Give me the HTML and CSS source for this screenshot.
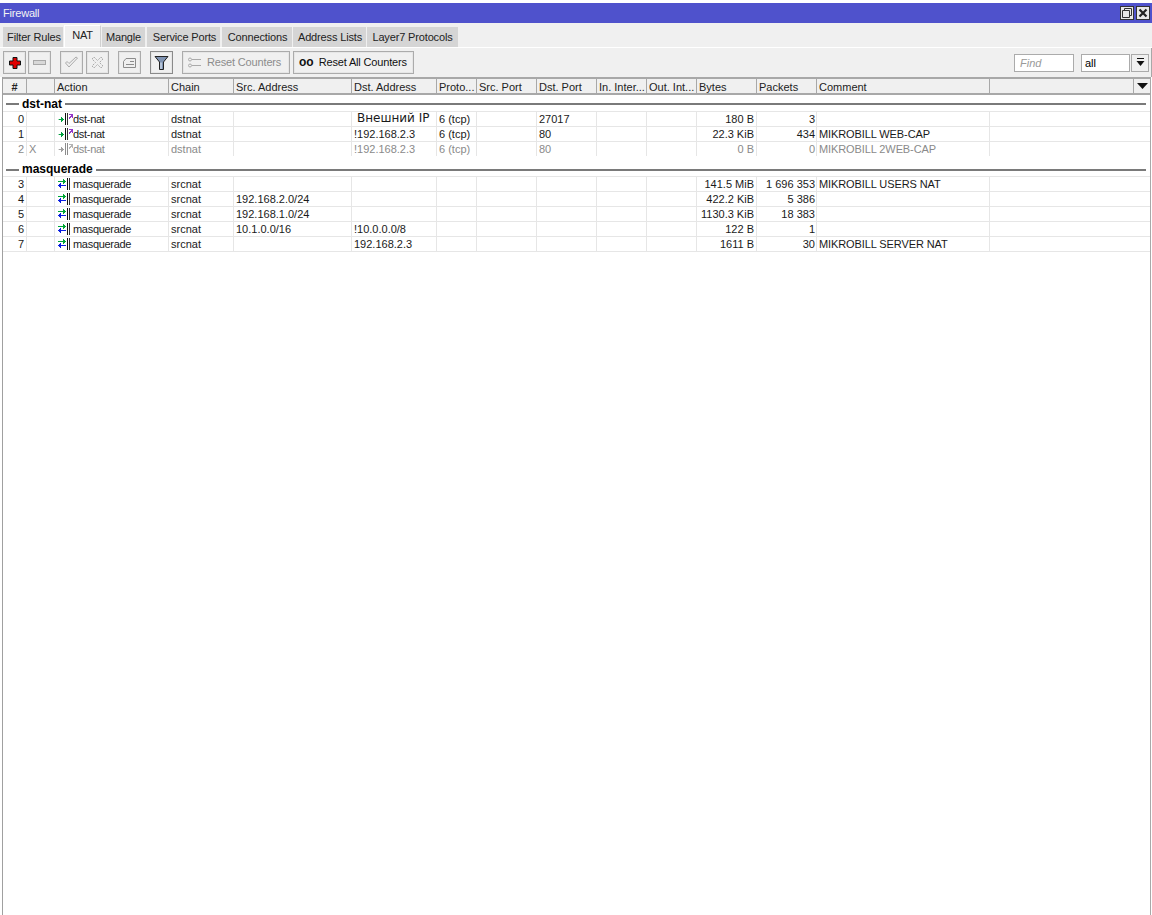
FILE: index.html
```html
<!DOCTYPE html>
<html lang="en">
<head>
<meta charset="utf-8">
<title>Firewall</title>
<link rel="stylesheet" href="styles.css">
</head>
<body>
<svg class="defs" width="0" height="0" aria-hidden="true">
  <symbol id="dst" viewBox="0 0 15 12"><path d="M0 6h1v1H0z" fill="#a8d8b8"/><path d="M1 6h2V4h1v1h1v1h1v1H5v1H4v1H3V7H1z" fill="#00a040"/><path d="M7 0h1v12H7z" fill="#111"/><path d="M9 0h1v12H9z" fill="#333"/><path d="M11 1h4v4h-1V4h-1v1h-1v1h-1V4h1V3h1V2h-2z" fill="#9438c8"/></symbol>
  <symbol id="dst-off" viewBox="0 0 15 12"><path d="M0 6h1v1H0z" fill="#ddd"/><path d="M1 6h2V4h1v1h1v1h1v1H5v1H4v1H3V7H1z" fill="#a0a0a0"/><path d="M7 0h1v12H7zM9 0h1v12H9z" fill="#8c8c8c"/><path d="M11 1h4v4h-1V4h-1v1h-1v1h-1V4h1V3h1V2h-2z" fill="#b4b4b4"/></symbol>
  <symbol id="masq" viewBox="0 0 15 12"><path d="M0 3h5V1h1v1h1v1h1v1H7v1H6v1H5V4H0z" fill="#00a838"/><path d="M8 7H3V5H2v1H1v1H0v1h1v1h1v1h1V8h5z" fill="#0a1ee0"/><path d="M9 0h1v12H9z" fill="#111"/><path d="M11 0h1v12h-1z" fill="#333"/></symbol>
</svg>
<div class="window">
  <div class="titlebar">
    <span class="title">Firewall</span>
    <div class="winbtns">
      <span class="winbtn"><svg width="12" height="12" viewBox="0 0 12 12"><path d="M1.500 3.500h7v7h-7zM3.500 3.500v-2h7v7h-2" fill="none" stroke="#333"/></svg></span>
      <span class="winbtn"><svg width="12" height="12" viewBox="0 0 12 12"><path d="M2.500 2.500l7 7M9.500 2.500l-7 7" stroke="#222" stroke-width="2.200" fill="none"/></svg></span>
    </div>
  </div>
  <div class="tabs">
    <span class="tab t1">Filter Rules</span>
    <span class="tab active">NAT</span>
    <span class="tab t3">Mangle</span>
    <span class="tab t4">Service Ports</span>
    <span class="tab t5">Connections</span>
    <span class="tab t6">Address Lists</span>
    <span class="tab t7">Layer7 Protocols</span>
  </div>
  <div class="toolbar">
    <button class="tb"><svg width="14" height="14" viewBox="0 0 14 14"><path d="M5 1.500h4v3.500h3.500v4H9v3.500H5V9H1.500V5H5z" fill="#e00000" stroke="#111"/></svg></button>
    <button class="tb gap-s"><svg width="13" height="7" viewBox="0 0 13 7"><rect x="0.500" y="1.500" width="12" height="4" fill="#d8d8d8" stroke="#a8a8a8"/></svg></button>
    <button class="tb gap-l"><svg width="15" height="13" viewBox="0 0 15 13"><path d="M1.500 7l3.500 4 8.500-9-1.500-1-7 6.500-2-2z" fill="#efefef" stroke="#ababab"/></svg></button>
    <button class="tb gap-s2"><svg width="13" height="13" viewBox="0 0 13 13"><path d="M1 3l2-2 3.500 3.500L10 1l2 2-3.500 3.500L12 10l-2 2-3.500-3.500L3 12l-2-2 3.500-3.500z" fill="#efefef" stroke="#ababab" stroke-dasharray="2 1"/></svg></button>
    <button class="tb gap-m"><svg width="15" height="12" viewBox="0 0 15 12"><path d="M1.500 4.500L4 1.500h9.500v9h-12z" fill="#efefef" stroke="#8c8c8c"/><path d="M8 4.500h4M4 7.500h8" stroke="#8c8c8c"/></svg></button>
    <button class="tb gap-m dark"><svg width="15" height="16" viewBox="0 0 15 16"><path d="M1 1.500h13L9.500 7v7.500h-4V7z" fill="#7f93b2" stroke="#222"/><path d="M7 7.500v6.500" stroke="#c9d4e4" stroke-width="1.500"/></svg></button>
    <button class="tb wide reset gap-m"><svg width="13" height="11" viewBox="0 0 13 11"><circle cx="2" cy="2.500" r="1.500" fill="none" stroke="#aaa"/><circle cx="2" cy="8.500" r="1.500" fill="none" stroke="#aaa"/><path d="M4 2.500h9M4 8.500h9" stroke="#aaa"/></svg><span class="off">Reset Counters</span></button>
    <button class="tb wide resetall"><span class="oo">oo</span><span>Reset All Counters</span></button>
    <div class="spacer"></div>
    <span class="find">Find</span>
    <span class="select">all</span>
    <span class="selbtn"><svg width="9" height="9" viewBox="0 0 9 9"><path d="M1 0.500h7" stroke="#111"/><path d="M0.500 3h8L4.500 8z" fill="#111"/></svg></span>
  </div>
  <div class="list">
    <div class="grid head">
      <span class="c center">#</span><span class="c"></span><span class="c">Action</span><span class="c">Chain</span><span class="c">Src. Address</span><span class="c">Dst. Address</span><span class="c">Proto...</span><span class="c">Src. Port</span><span class="c">Dst. Port</span><span class="c">In. Inter...</span><span class="c">Out. Int...</span><span class="c">Bytes</span><span class="c">Packets</span><span class="c">Comment</span><span class="c"></span>
      <span class="c menu"><svg width="11" height="6" viewBox="0 0 11 6"><path d="M0 0h11L5.500 6z" fill="#111"/></svg></span>
    </div>
    <div class="group first"><span class="dash"></span><b>dst-nat</b><span class="rule"></span></div>
    <div class="grid row">
      <span class="c num">0</span><span class="c"></span><span class="c act"><svg class="ic"><use href="#dst"/></svg>dst-nat</span><span class="c">dstnat</span><span class="c"></span><span class="c ext">Внешний IP</span><span class="c">6 (tcp)</span><span class="c"></span><span class="c">27017</span><span class="c"></span><span class="c"></span><span class="c r">180 B</span><span class="c r">3</span><span class="c"></span><span class="c"></span>
    </div>
    <div class="grid row">
      <span class="c num">1</span><span class="c"></span><span class="c act"><svg class="ic"><use href="#dst"/></svg>dst-nat</span><span class="c">dstnat</span><span class="c"></span><span class="c">!192.168.2.3</span><span class="c">6 (tcp)</span><span class="c"></span><span class="c">80</span><span class="c"></span><span class="c"></span><span class="c r">22.3 KiB</span><span class="c r">434</span><span class="c">MIKROBILL WEB-CAP</span><span class="c"></span>
    </div>
    <div class="grid row disabled">
      <span class="c num">2</span><span class="c flag">X</span><span class="c act"><svg class="ic"><use href="#dst-off"/></svg>dst-nat</span><span class="c">dstnat</span><span class="c"></span><span class="c">!192.168.2.3</span><span class="c">6 (tcp)</span><span class="c"></span><span class="c">80</span><span class="c"></span><span class="c"></span><span class="c r">0 B</span><span class="c r">0</span><span class="c">MIKROBILL 2WEB-CAP</span><span class="c"></span>
    </div>
    <div class="group second"><span class="dash"></span><b>masquerade</b><span class="rule"></span></div>
    <div class="grid row">
      <span class="c num">3</span><span class="c"></span><span class="c act"><svg class="ic"><use href="#masq"/></svg>masquerade</span><span class="c">srcnat</span><span class="c"></span><span class="c"></span><span class="c"></span><span class="c"></span><span class="c"></span><span class="c"></span><span class="c"></span><span class="c r">141.5 MiB</span><span class="c r">1 696 353</span><span class="c">MIKROBILL USERS NAT</span><span class="c"></span>
    </div>
    <div class="grid row">
      <span class="c num">4</span><span class="c"></span><span class="c act"><svg class="ic"><use href="#masq"/></svg>masquerade</span><span class="c">srcnat</span><span class="c">192.168.2.0/24</span><span class="c"></span><span class="c"></span><span class="c"></span><span class="c"></span><span class="c"></span><span class="c"></span><span class="c r">422.2 KiB</span><span class="c r">5 386</span><span class="c"></span><span class="c"></span>
    </div>
    <div class="grid row">
      <span class="c num">5</span><span class="c"></span><span class="c act"><svg class="ic"><use href="#masq"/></svg>masquerade</span><span class="c">srcnat</span><span class="c">192.168.1.0/24</span><span class="c"></span><span class="c"></span><span class="c"></span><span class="c"></span><span class="c"></span><span class="c"></span><span class="c r">1130.3 KiB</span><span class="c r">18 383</span><span class="c"></span><span class="c"></span>
    </div>
    <div class="grid row">
      <span class="c num">6</span><span class="c"></span><span class="c act"><svg class="ic"><use href="#masq"/></svg>masquerade</span><span class="c">srcnat</span><span class="c">10.1.0.0/16</span><span class="c">!10.0.0.0/8</span><span class="c"></span><span class="c"></span><span class="c"></span><span class="c"></span><span class="c"></span><span class="c r">122 B</span><span class="c r">1</span><span class="c"></span><span class="c"></span>
    </div>
    <div class="grid row">
      <span class="c num">7</span><span class="c"></span><span class="c act"><svg class="ic"><use href="#masq"/></svg>masquerade</span><span class="c">srcnat</span><span class="c"></span><span class="c">192.168.2.3</span><span class="c"></span><span class="c"></span><span class="c"></span><span class="c"></span><span class="c"></span><span class="c r">1611 B</span><span class="c r">30</span><span class="c">MIKROBILL SERVER NAT</span><span class="c"></span>
    </div>
  </div>
</div>
</body>
</html>
```
FILE: styles.css
```css
html, body { margin: 0; padding: 0; height: 100%; background: #fff; }
body { overflow: hidden; font: 11px/15px "Liberation Sans", Arial, sans-serif; color: #111; }
.defs { position: absolute; }
.window { height: 915px; padding-top: 3px; box-sizing: border-box; display: flex; flex-direction: column; }

.titlebar { height: 20px; flex: none; background: #4f52cc; display: flex; align-items: center; justify-content: space-between; padding: 0 2px 0 3px; }
.title { color: #f4f4f4; font-size: 11px; letter-spacing: -0.2px; }
.winbtns { display: flex; gap: 2px; }
.winbtn { width: 12px; height: 12px; border: 1px solid #333; background: #e8e8e8; display: flex; }

.tabs { height: 25px; flex: none; box-sizing: border-box; background: #f0f0f0; border-bottom: 1px solid #fff; display: flex; align-items: flex-end; padding-left: 3px; }
.tab { height: 20px; box-sizing: border-box; background: #d5d5d5; padding: 3px 0 0; text-align: center; color: #222; letter-spacing: -0.15px; white-space: nowrap; }
.t1 { width: 60px; padding-left: 2px; }
.active { width: 37px; height: 22px; margin-left: 1px; background: #f0f0f0; padding-top: 2px; border-left: 1px solid #fff; border-top: 1px solid #fff; border-right: 1px solid #d0d0d0; }
.t3 { width: 43px; margin-left: 1px; }
.t4 { width: 73px; margin-left: 2px; padding-left: 2px; }
.t5 { width: 70px; margin-left: 2px; padding-left: 1px; }
.t6 { width: 73px; margin-left: 1px; padding-left: 1px; }
.t7 { width: 91px; margin-left: 1px; }

.toolbar { height: 29px; flex: none; box-sizing: border-box; background: #f0f0f0; display: flex; align-items: center; padding: 0 2px 0 3px; border-right: 1px solid #a8a8a8; }
.tb { width: 23px; height: 23px; box-sizing: border-box; padding: 0; margin: 0; background: #f0f0f0; border: 1px solid #ababab; outline: 1px solid #e6e6e6; outline-offset: -2px; display: flex; align-items: center; justify-content: center; font: inherit; color: #111; letter-spacing: -0.16px; white-space: nowrap; }
.gap-s { margin-left: 2px; }
.gap-s2 { margin-left: 3px; }
.gap-l { margin-left: 9px; }
.gap-m { margin-left: 9px; }
.dark { border-color: #8a8a8a; }
.wide { justify-content: flex-start; }
.reset { width: 108px; padding-left: 5px; gap: 6px; }
.off { color: #8c8c8c; }
.resetall { width: 121px; margin-left: 3px; padding-left: 5px; gap: 5px; }
.oo { font-weight: 700; font-size: 12px; line-height: 13px; letter-spacing: 0; }
.spacer { flex: 1; }
.find { width: 60px; height: 18px; box-sizing: border-box; background: #fff; border: 1px solid #ababab; color: #999; font-style: italic; padding-left: 5px; line-height: 17px; margin-right: 7px; }
.select { width: 49px; height: 18px; box-sizing: border-box; background: #fff; border: 1px solid #ababab; padding-left: 3px; line-height: 17px; color: #000; }
.selbtn { width: 18px; height: 18px; box-sizing: border-box; border: 1px solid #ababab; margin-left: 1px; display: flex; align-items: center; justify-content: center; }

.list { flex: 1; margin-left: 2px; border-left: 1px solid #a0a0a0; border-right: 1px solid #a8a8a8; margin-right: 1px; background: #fff; }
.grid { display: grid; grid-template-columns: 24px 28px 114px 65px 118px 85px 40px 60px 60px 50px 50px 60px 60px 173px 1fr; }
.head { height: 18px; box-sizing: border-box; background: #f0f0f0; border-top: 2px solid #a8a8a8; border-bottom: 2px solid #a8a8a8; position: relative; }
.head .c { border-right: 1px solid #a8a8a8; line-height: 16px; padding: 0 0 0 2px; color: #222; }
.head .center { text-align: center; font-weight: 700; padding: 0; }
.head .c:nth-child(15) { border-right: 0; }
.menu { position: absolute; right: 0; top: 0; width: 17px; height: 14px; box-sizing: border-box; padding: 0 !important; display: flex; align-items: center; justify-content: center; border-left: 1px solid #a8a8a8; border-right: 0 !important; }

.group { display: flex; align-items: center; gap: 3px; font-size: 12px; color: #000; box-sizing: border-box; padding-left: 3px; padding-right: 4px; }
.group.first { height: 16px; padding-top: 2px; }
.group.second { height: 20px; padding-top: 7px; }
.dash { width: 13px; height: 2px; background: #7a7a7a; flex: none; }
.rule { flex: 1; height: 2px; background: #7a7a7a; }

.row { height: 15px; box-sizing: border-box; border-top: 1px solid #e6e6e6; }
.row:last-child { height: 16px; border-bottom: 1px solid #e6e6e6; }
.row .c { border-right: 1px solid #e6e6e6; padding-left: 2px; line-height: 14px; white-space: nowrap; overflow: hidden; color: #1a1a1a; }
.row .num { text-align: right; padding: 0 2px 0 0; }
.row .r { text-align: right; padding: 0 1px 0 0; }
.row .c:nth-child(12) { padding-right: 2px; }
.row .c:nth-child(14) { letter-spacing: -0.1px; }
.row .act { display: flex; align-items: center; padding-left: 3px; letter-spacing: -0.3px; }
.row .ic { flex: none; width: 15px; height: 12px; }
.row .ext { font-family: "DejaVu Sans", sans-serif; font-size: 12px; padding-left: 5px; line-height: 12px; }
.row .c:nth-child(15) { border-right: 0; }
.disabled .c { color: #8a8a8a; }
```
